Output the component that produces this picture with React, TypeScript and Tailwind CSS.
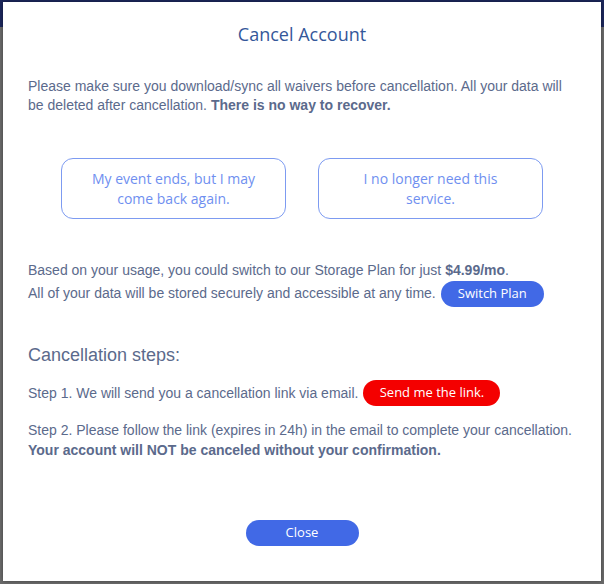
export default function App() {
  return (
    <div className="relative w-[604px] h-[584px] overflow-hidden bg-[#6b6b6b]">
      {/* page behind the overlay */}
      <div className="h-[27px] bg-[#1c275c]" />

      <div className="absolute left-[3px] top-[2px] w-[598px] h-[579px] bg-white shadow-[0_0_4px_rgba(0,0,0,0.4)] flex flex-col font-['Liberation_Sans',Arial,sans-serif] text-[#5b6a8c]">
        <h1 className="pt-[20px] text-center text-[18px] leading-[24px] text-[#34579a] font-['Open_Sans','Noto_Sans',sans-serif]">
          Cancel Account
        </h1>

        <p className="mt-[31px] px-[25px] text-[14px] leading-[19px]">
          Please make sure you download/sync all waivers before cancellation. All your data will be
          deleted after cancellation. <b>There is no way to recover.</b>
        </p>

        <div className="mt-[43px] flex justify-center gap-[32px]">
          {["My event ends, but I may come back again.", "I no longer need this service."].map((t) => (
            <button
              key={t}
              className="w-[225px] h-[61px] rounded-[12px] border border-[#7d9bf1] px-[28px] text-[14px] leading-[20px] text-[#6f8ff0] font-['Open_Sans','Noto_Sans',sans-serif]"
            >
              {t}
            </button>
          ))}
        </div>

        <div className="mt-[40px] px-[25px] text-[14px] leading-[23px]">
          <div>
            Based on your usage, you could switch to our Storage Plan for just <b>$4.99/mo</b>.
          </div>
          <div className="flex items-center h-[23px]">
            All of your data will be stored securely and accessible at any time.
            <button className="ml-[5px] w-[103px] h-[26px] shrink-0 rounded-full bg-[#4169e6] text-[13px] text-white font-['Open_Sans','Noto_Sans',sans-serif]">
              Switch Plan
            </button>
          </div>
        </div>

        <h2 className="mt-[38px] px-[25px] text-[18px] leading-[24px]">Cancellation steps:</h2>

        <div className="mt-[13px] px-[25px] flex items-center text-[14px]">
          Step 1. We will send you a cancellation link via email.
          <button className="ml-[5px] w-[137px] h-[26px] rounded-full bg-[#f40000] text-[13px] text-white font-['Open_Sans','Noto_Sans',sans-serif]">
            Send me the link.
          </button>
        </div>

        <p className="mt-[14px] px-[25px] text-[14px] leading-[20px]">
          Step 2. Please follow the link (expires in 24h) in the email to complete your cancellation.
          <br />
          <b>Your account will NOT be canceled without your confirmation.</b>
        </p>

        <div className="mt-auto mb-[35px] flex justify-center">
          <button className="w-[113px] h-[26px] rounded-full bg-[#4169e6] text-[13px] text-white font-['Open_Sans','Noto_Sans',sans-serif]">
            Close
          </button>
        </div>
      </div>
    </div>
  );
}
